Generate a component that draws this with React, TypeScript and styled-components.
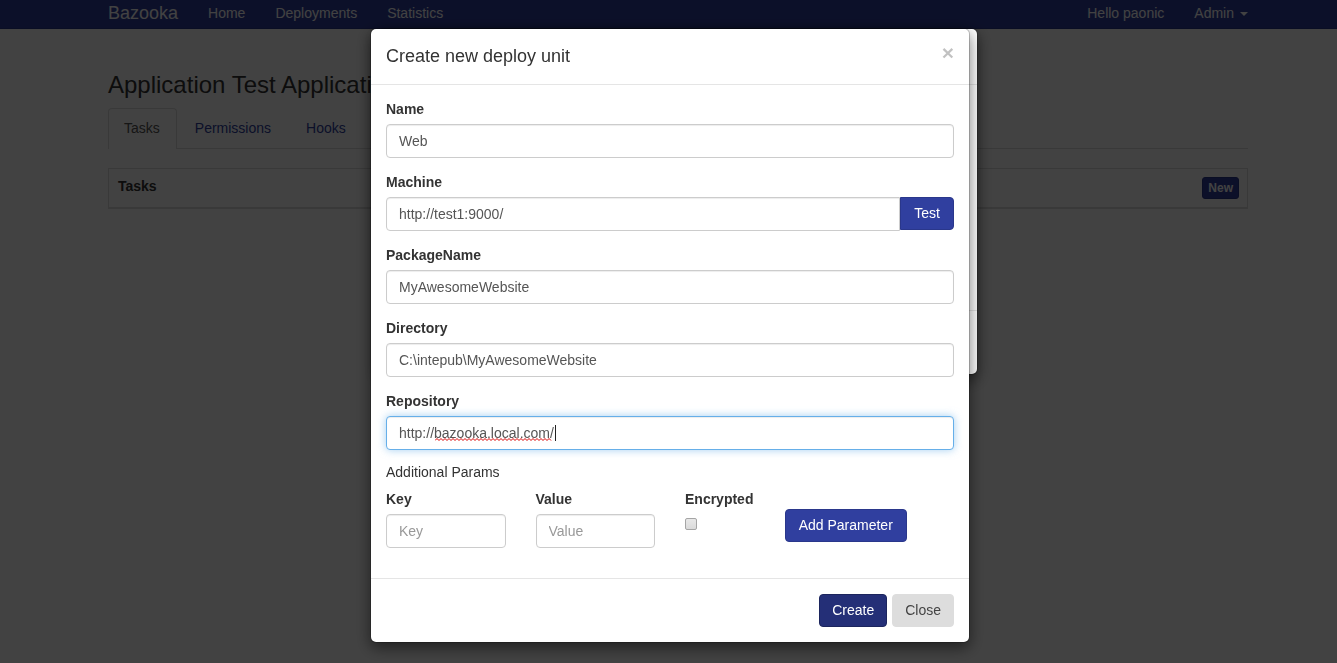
import React, { useState } from "react";
import styled, { createGlobalStyle, css } from "styled-components";

const GlobalStyle = createGlobalStyle`
  *, *::before, *::after { box-sizing: border-box; }
  body {
    margin: 0;
    background: #fff;
    color: #333;
    font-family: "Liberation Sans", Arial, sans-serif;
    font-size: 14px;
    line-height: 20px;
  }
  button, input { font: inherit; }
`;

const NavBar = styled.nav`
  padding: 3px 0 5px 19px;
  background: #303f9f;
  border-bottom: 1px solid #2a378b;
`;

const Container = styled.div`
  max-width: 1140px;
  margin: 0 auto;
`;

const NavContent = styled(Container)`
  display: flex;
  align-items: center;
  gap: 30px;
`;

const Brand = styled.a`
  color: #fff;
  font-size: 18px;
  text-decoration: none;
`;

const NavLink = styled.a`
  color: #fff;
  text-decoration: none;
`;

const NavRight = styled.div`
  display: flex;
  gap: 30px;
  margin-left: auto;
`;

const Caret = styled.span`
  display: inline-block;
  margin-left: 6px;
  vertical-align: middle;
  border: 4px solid transparent;
  border-top-color: currentColor;
  border-bottom: 0;
`;

const Main = styled.main`
  padding: 43px 0 20px 19px;
`;

const Heading = styled.h1`
  margin: 0 0 10px;
  font-size: 24px;
  font-weight: 400;
  line-height: 26px;
`;

const TabList = styled.div`
  display: flex;
  gap: 2px;
  margin-bottom: 19px;
  border-bottom: 1px solid #ddd;
`;

const Tab = styled.a<{ $active?: boolean }>`
  margin-bottom: -1px;
  padding: 9px 16px 11px 15px;
  border: 1px solid transparent;
  border-bottom: 0;
  border-radius: 4px 4px 0 0;
  color: #303f9f;
  text-decoration: none;
  ${(p) =>
    p.$active &&
    css`
      border-color: #ddd;
      background: #fff;
      color: #555;
    `}
`;

const Panel = styled.section`
  display: flex;
  justify-content: space-between;
  padding: 8px;
  border: 1px solid #ddd;
  border-bottom-width: 2px;
`;

const PanelTitle = styled.h2`
  margin: 0;
  padding-left: 1px;
  font-size: 14px;
  line-height: 19px;
`;

const SmallButton = styled.button`
  padding: 1px 5px;
  border: 1px solid #2a378b;
  border-radius: 3px;
  background: #303f9f;
  color: #fff;
  font-size: 12px;
  font-weight: 700;
  line-height: 18px;
`;

const Backdrop = styled.div`
  position: fixed;
  inset: 0;
  background: rgba(0, 0, 0, 0.74);
`;

const ModalLayer = styled.div<{ $shift: number }>`
  position: fixed;
  inset: 0;
  padding: 28px 0 0 ${(p) => p.$shift}px;
  overflow: hidden;
`;

const Dialog = styled.div`
  max-width: 600px;
  margin: 0 auto;
  border: 1px solid rgba(0, 0, 0, 0.2);
  border-radius: 6px;
  background: #fff;
  background-clip: padding-box;
  box-shadow: 0 5px 15px rgba(0, 0, 0, 0.5);
`;

const DialogHeader = styled.header`
  display: flex;
  justify-content: space-between;
  align-items: flex-start;
  min-height: 56px;
  padding: 15px;
  border-bottom: 1px solid #e5e5e5;
`;

const DialogTitle = styled.h4`
  margin: 0;
  font-size: 18px;
  font-weight: 400;
  line-height: 25px;
`;

const CloseIcon = styled.button`
  padding: 0;
  border: 0;
  background: transparent;
  color: #000;
  font-size: 21px;
  font-weight: 700;
  line-height: 17px;
  opacity: 0.24;
`;

const DialogBody = styled.div`
  padding: 15px;
`;

const EmptyBody = styled(DialogBody)`
  min-height: 225px;
`;

const DialogFooter = styled.footer`
  display: flex;
  justify-content: flex-end;
  gap: 5px;
  min-height: 64px;
  padding: 15px;
  border-top: 1px solid #e5e5e5;
`;

const Field = styled.div`
  margin-bottom: 15px;
`;

const Label = styled.label`
  display: block;
  padding-bottom: 5px;
  font-weight: 700;
  line-height: 19px;
`;

const TextInput = styled.input<{ $active?: boolean; $grouped?: boolean }>`
  display: block;
  width: 100%;
  min-width: 0;
  height: 34px;
  padding: 6px 12px;
  border: 1px solid #ccc;
  border-radius: ${(p) => (p.$grouped ? "4px 0 0 4px" : "4px")};
  background: #fff;
  box-shadow: inset 0 1px 1px rgba(0, 0, 0, 0.075);
  color: #555;
  outline: 0;
  &::placeholder {
    color: #999;
    opacity: 1;
  }
  ${(p) =>
    p.$active &&
    css`
      border-color: #66afe9;
      box-shadow: inset 0 1px 1px rgba(0, 0, 0, 0.075), 0 0 8px rgba(102, 175, 233, 0.6);
      caret-color: transparent;
    `}
`;

const InputGroup = styled.div`
  display: flex;
  align-items: flex-start;
`;

const Button = styled.button<{ $tone?: "dark" | "plain"; $grouped?: boolean }>`
  height: 33px;
  padding: 0 ${(p) => (p.$tone ? 12 : 13)}px 2px;
  border: 1px solid #2a378b;
  border-radius: ${(p) => (p.$grouped ? "0 4px 4px 0" : "4px")};
  background: #303f9f;
  color: #fff;
  white-space: nowrap;
  ${(p) =>
    p.$tone === "dark" &&
    css`
      background: #242f77;
      border-color: #1c255d;
    `}
  ${(p) =>
    p.$tone === "plain" &&
    css`
      background: #ddd;
      border-color: #ddd;
      color: #444;
    `}
`;

const EditArea = styled.div`
  position: relative;
`;

const Squiggle = styled.svg`
  position: absolute;
  top: 22px;
  left: 49px;
  pointer-events: none;
`;

const TextCursor = styled.span`
  position: absolute;
  top: 9px;
  left: 169px;
  width: 1px;
  height: 16px;
  background: #222;
`;

const ParamsCaption = styled.div`
  margin: -3px 0 8px;
`;

const ParamsRow = styled.div`
  display: grid;
  grid-template-columns: 3fr 3fr 2fr 4fr;
  margin: 0 -15px;
`;

const ParamCell = styled.div`
  min-width: 0;
  padding: 0 15px 15px;
`;

const ParamAction = styled(ParamCell)`
  padding-top: 19px;
`;

const CheckBox = styled.input`
  display: block;
  appearance: none;
  width: 12px;
  height: 12px;
  margin: 4px 0 0;
  border: 1px solid #a5a5a5;
  border-radius: 2px;
  background: linear-gradient(#e8e8e8, #dadada);
`;

function TextField(props: { id: string; label: string; initial: string }) {
  const [value, setValue] = useState(props.initial);
  return (
    <Field>
      <Label htmlFor={props.id}>{props.label}</Label>
      <TextInput id={props.id} value={value} onChange={(e) => setValue(e.target.value)} />
    </Field>
  );
}

const wave = "M0 2.5" + Array.from({ length: 29 }, (_, i) => `L${i * 4 + 2} 0.5L${i * 4 + 4} 2.5`).join("");

export default function App() {
  return (
    <>
      <GlobalStyle />
      <NavBar>
        <NavContent>
          <Brand href="#">Bazooka</Brand>
          <NavLink href="#">Home</NavLink>
          <NavLink href="#">Deployments</NavLink>
          <NavLink href="#">Statistics</NavLink>
          <NavRight>
            <NavLink href="#">Hello paonic</NavLink>
            <NavLink href="#">
              Admin
              <Caret />
            </NavLink>
          </NavRight>
        </NavContent>
      </NavBar>
      <Main>
        <Container>
          <Heading>Application Test Application</Heading>
          <TabList>
            <Tab href="#" $active>Tasks</Tab>
            <Tab href="#">Permissions</Tab>
            <Tab href="#">Hooks</Tab>
          </TabList>
          <Panel>
            <PanelTitle>Tasks</PanelTitle>
            <SmallButton type="button">New</SmallButton>
          </Panel>
        </Container>
      </Main>

      <Backdrop />
      <ModalLayer $shift={18}>
        <Dialog>
          <DialogHeader />
          <EmptyBody />
          <DialogFooter />
        </Dialog>
      </ModalLayer>
      <ModalLayer $shift={3}>
        <Dialog role="dialog" aria-labelledby="dialog-title">
          <DialogHeader>
            <DialogTitle id="dialog-title">Create new deploy unit</DialogTitle>
            <CloseIcon type="button" aria-label="Close dialog">×</CloseIcon>
          </DialogHeader>
          <DialogBody>
            <TextField id="name" label="Name" initial="Web" />
            <Field>
              <Label htmlFor="machine">Machine</Label>
              <InputGroup>
                <TextInput id="machine" defaultValue="http://test1:9000/" $grouped />
                <Button type="button" $grouped>Test</Button>
              </InputGroup>
            </Field>
            <TextField id="package" label="PackageName" initial="MyAwesomeWebsite" />
            <TextField id="directory" label="Directory" initial={"C:\\intepub\\MyAwesomeWebsite"} />
            <Field>
              <Label htmlFor="repository">Repository</Label>
              <EditArea>
                <TextInput id="repository" defaultValue="http://bazooka.local.com/" $active />
                <Squiggle width="117" height="3" viewBox="0 0 117 3" aria-hidden="true">
                  <path d={wave} fill="none" stroke="#d80000" strokeWidth="1" />
                </Squiggle>
                <TextCursor />
              </EditArea>
            </Field>
            <ParamsCaption>Additional Params</ParamsCaption>
            <ParamsRow>
              <ParamCell>
                <Label htmlFor="key">Key</Label>
                <TextInput id="key" placeholder="Key" />
              </ParamCell>
              <ParamCell>
                <Label htmlFor="value">Value</Label>
                <TextInput id="value" placeholder="Value" />
              </ParamCell>
              <ParamCell>
                <Label htmlFor="encrypted">Encrypted</Label>
                <CheckBox id="encrypted" type="checkbox" />
              </ParamCell>
              <ParamAction>
                <Button type="button">Add Parameter</Button>
              </ParamAction>
            </ParamsRow>
          </DialogBody>
          <DialogFooter>
            <Button type="button" $tone="dark">Create</Button>
            <Button type="button" $tone="plain">Close</Button>
          </DialogFooter>
        </Dialog>
      </ModalLayer>
    </>
  );
}
